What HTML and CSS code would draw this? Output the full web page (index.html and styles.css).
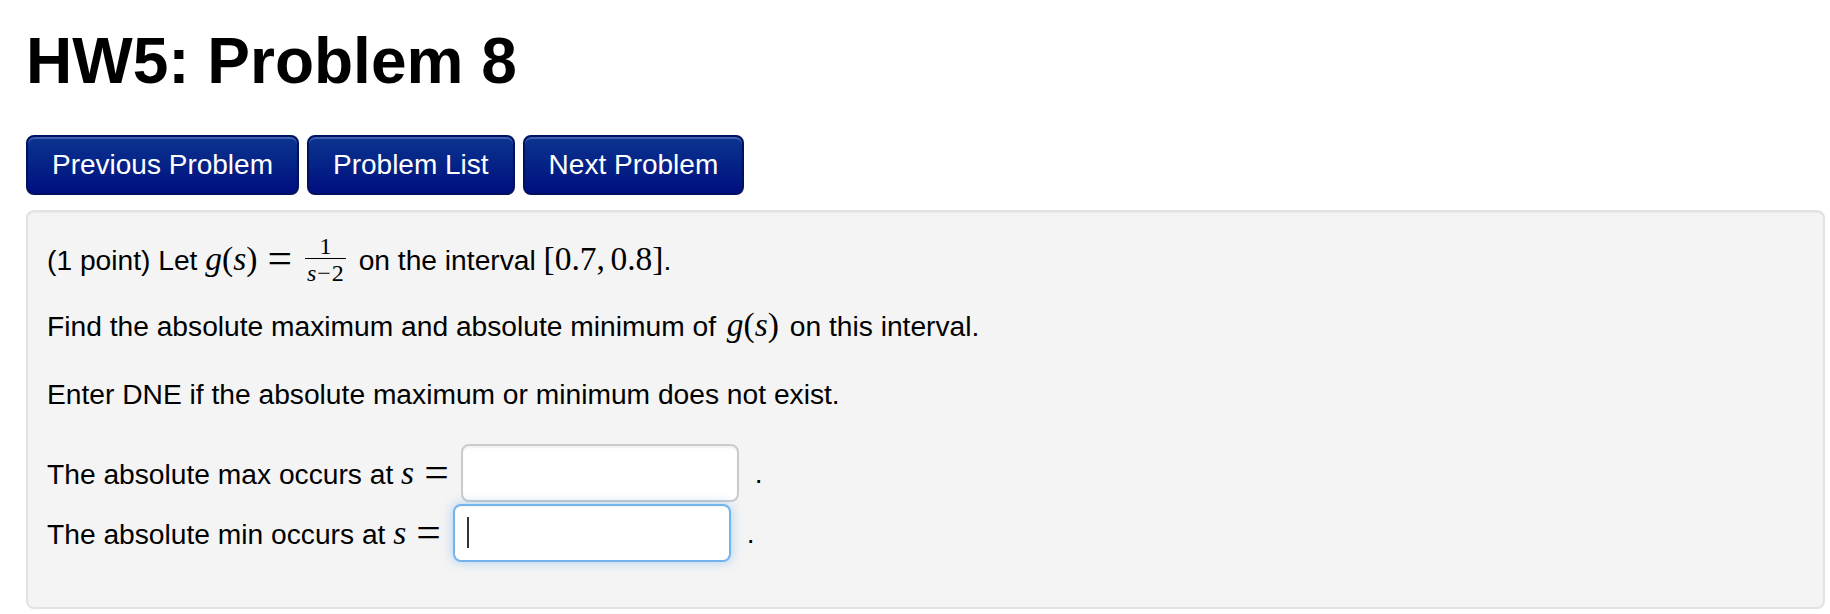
FILE: index.html
```html
<!DOCTYPE html>
<html lang="en">
<head>
<meta charset="utf-8">
<title>HW5: Problem 8</title>
<link rel="stylesheet" href="styles.css">
</head>
<body>
  <h1 class="page-title">HW5: Problem 8</h1>
  <nav class="problem-nav">
    <a class="nav-btn" href="#">Previous Problem</a>
    <a class="nav-btn" href="#">Problem List</a>
    <a class="nav-btn" href="#">Next Problem</a>
  </nav>
  <div class="problem-panel">
    <p class="line">(1 point) Let <span class="m"><span class="mi">g</span>(<span class="mi">s</span>)<span class="eq">=</span><span class="frac"><span class="num">1</span><span class="den"><span class="mi">s</span><span class="minus">−</span>2</span></span></span> on the interval <span class="m">[0.7,<span class="thin"></span>0.8]</span>.</p>
    <p class="line">Find the absolute maximum and absolute minimum of <span class="m spaced"><span class="mi">g</span>(<span class="mi">s</span>)</span> on this interval.</p>
    <p class="line">Enter DNE if the absolute maximum or minimum does not exist.</p>
    <div class="answer-row first">
      <span class="label">The absolute max occurs at <span class="m"><span class="mi">s</span><span class="eq end">=</span></span></span>
      <span class="field-wrap"><input class="answer" type="text" aria-label="absolute max"></span>
      <span class="dot">.</span>
    </div>
    <div class="answer-row">
      <span class="label">The absolute min occurs at <span class="m"><span class="mi">s</span><span class="eq end">=</span></span></span>
      <span class="field-wrap"><input class="answer focused" type="text" aria-label="absolute min"><span class="caret"></span></span>
      <span class="dot">.</span>
    </div>
  </div>
</body>
</html>
```

FILE: styles.css
```css
html, body {
  margin: 0;
  background: #ffffff;
}
body {
  padding: 26px 5px 0 26px;
  font-family: "Liberation Sans", Arial, Helvetica, sans-serif;
  color: #000;
}
.page-title {
  margin: 0;
  font-size: 64px;
  line-height: 70px;
  font-weight: bold;
  color: #000;
}
.problem-nav {
  display: flex;
  gap: 8px;
  margin-top: 39px;
}
.nav-btn {
  display: block;
  box-sizing: border-box;
  height: 60px;
  padding: 8px 24px;
  border: 2px solid #00115f;
  border-radius: 8px;
  font-size: 28px;
  line-height: 40px;
  color: #fff;
  text-decoration: none;
  white-space: nowrap;
  background: linear-gradient(to bottom, #0c3490 0%, #072a8a 30%, #000f80 100%);
  box-shadow: inset 0 2px 0 rgba(120, 150, 220, 0.45);
}
.problem-panel {
  margin-top: 15px;
  border: 2px solid #e2e2e2;
  border-radius: 8px;
  background: #f4f4f4;
  padding: 25px 19px 45px 19px;
  box-shadow: inset 0 1px 1px rgba(0, 0, 0, 0.04);
}
.line {
  margin: 0 0 28.5px 0;
  height: 40px;
  font-size: 28.2px;
  line-height: 40px;
  white-space: nowrap;
}
.m {
  font-family: "Liberation Serif", "Times New Roman", serif;
  font-size: 33.5px;
  line-height: 1;
}
.m.spaced {
  margin: 0 3px 0 3px;
}
.mi {
  font-style: italic;
}
.thin {
  display: inline-block;
  width: 5.5px;
}
.eq {
  display: inline-block;
  font-size: 1.3em;
  line-height: 1;
  vertical-align: -3px;
  margin: 0 9px 0 10px;
}
.eq.end {
  margin-right: 0;
}
.frac {
  display: inline-block;
  vertical-align: -11px;
  margin: -8px 5px -8px 4px;
  font-size: 24px;
  text-align: center;
}
.num {
  display: block;
  line-height: 17px;
  padding: 0 2px 3px;
}
.den {
  display: block;
  line-height: 17px;
  padding: 6px 2px 0;
  border-top: 1.5px solid #000;
}
.minus {
  margin: 0 1px;
}
.answer-row {
  display: flex;
  align-items: center;
  height: 58px;
  margin-top: 2px;
  font-size: 28.2px;
  line-height: 40px;
  white-space: nowrap;
}
.answer-row.first {
  margin-top: 30px;
}
.field-wrap {
  position: relative;
  display: block;
  margin-left: 12px;
}
.answer {
  display: block;
  box-sizing: border-box;
  width: 278px;
  height: 58px;
  margin: 0;
  padding: 8px 12px;
  border: 2px solid #cbcbcb;
  border-radius: 8px;
  background: #fff;
  font-family: "Liberation Sans", Arial, sans-serif;
  font-size: 28px;
  outline: none;
  box-shadow: inset 0 2px 2px rgba(0, 0, 0, 0.06);
}
.answer.focused {
  border-color: #74b4ec;
  box-shadow: inset 0 1px 1px rgba(0, 0, 0, 0.05), 0 0 12px rgba(82, 160, 236, 0.45);
}
.caret {
  position: absolute;
  left: 14px;
  top: 13px;
  width: 2px;
  height: 31px;
  background: #333;
}
.dot {
  margin-left: 16px;
}
```
